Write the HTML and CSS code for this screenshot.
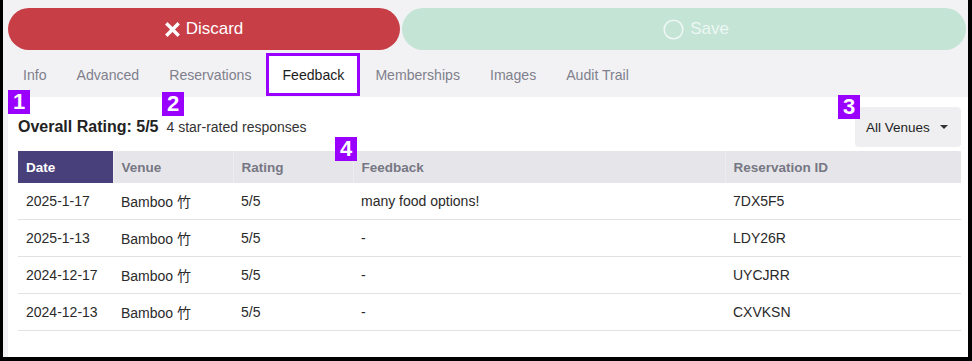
FILE: index.html
```html
<!DOCTYPE html>
<html lang="en">
<head>
  <meta charset="UTF-8" />
  <meta name="viewport" content="width=device-width, initial-scale=1.0" />
  <title>Venue — Feedback</title>
  <link rel="stylesheet" href="styles.css">
</head>
<body>
  <div class="frame">
    <div class="actions">
      <button class="btn discard" type="button">
        <svg width="15" height="15" viewBox="0 0 15 15"><path d="M2.5 2.5 L12.5 12.5 M12.5 2.5 L2.5 12.5" stroke="#fff" stroke-width="3.4" stroke-linecap="square"/></svg>
        Discard
      </button>
      <button class="btn save" type="button" disabled>
        <svg width="21" height="21" viewBox="0 0 21 21"><circle cx="10.5" cy="10.5" r="9.3" fill="none" stroke="currentColor" stroke-width="1.6"/></svg>
        Save
      </button>
    </div>

    <nav class="tabs">
      <a class="tab">Info</a>
      <a class="tab">Advanced</a>
      <a class="tab">Reservations</a>
      <a class="tab active">Feedback</a>
      <a class="tab">Memberships</a>
      <a class="tab">Images</a>
      <a class="tab">Audit Trail</a>
    </nav>

    <div class="panel">
      <div class="summary">
        <span class="rating">Overall Rating: 5/5</span>
        <span class="count">4 star-rated responses</span>
        <button class="select" type="button">All Venues <span class="caret"></span></button>
      </div>

      <table class="grid">
        <thead>
          <tr>
            <th class="c-date sorted">Date</th>
            <th class="c-venue">Venue</th>
            <th class="c-rating">Rating</th>
            <th class="c-feedback">Feedback</th>
            <th class="c-id">Reservation ID</th>
          </tr>
        </thead>
        <tbody>
          <tr><td>2025-1-17</td><td>Bamboo 竹</td><td>5/5</td><td>many food options!</td><td>7DX5F5</td></tr>
          <tr><td>2025-1-13</td><td>Bamboo 竹</td><td>5/5</td><td>-</td><td>LDY26R</td></tr>
          <tr><td>2024-12-17</td><td>Bamboo 竹</td><td>5/5</td><td>-</td><td>UYCJRR</td></tr>
          <tr><td>2024-12-13</td><td>Bamboo 竹</td><td>5/5</td><td>-</td><td>CXVKSN</td></tr>
        </tbody>
      </table>
    </div>

    <span class="marker m1">1</span>
    <span class="marker m2">2</span>
    <span class="marker m3">3</span>
    <span class="marker m4">4</span>
  </div>
</body>
</html>
```

FILE: styles.css
```css
body {
  margin: 0;
  font-family: "Liberation Sans", Arial, "Noto Sans CJK SC", sans-serif;
  background: #000;
}
.frame {
  position: relative;
  box-sizing: border-box;
  height: 361px;
  background: #f2f2f4;
  border-left: 3px solid #000;
  border-right: 4px solid #000;
  border-bottom: 4px solid #000;
  display: flex;
  flex-direction: column;
  overflow: hidden;
}
.actions {
  display: flex;
  gap: 2px;
  padding: 8px 2px 0 5px;
}
.btn {
  height: 42px;
  border: none;
  border-radius: 21px;
  display: flex;
  align-items: center;
  justify-content: center;
  gap: 6px;
  font-family: inherit;
  font-size: 17px;
  color: #fff;
  cursor: pointer;
}
.discard {
  width: 392px;
  background: #c73e47;
}
.save {
  flex: 1;
  padding-left: 30px;
  background: #c4e4d6;
  color: rgba(255,255,255,0.72);
}
.tabs {
  display: flex;
  margin-top: 3px;
  padding-left: 5px;
  height: 43px;
}
.tab {
  display: flex;
  align-items: center;
  padding: 0 15px;
  font-size: 14.1px;
  color: #80808c;
}
.tab.active {
  background: #fff;
  color: #1c1c1c;
  padding: 0 13px;
  border: 3px solid #9a00ff;
  box-sizing: border-box;
}
.panel {
  flex: 1;
  background: #fff;
  margin-left: 5px;
  margin-top: 1px;
  padding: 10px 7px 0 10px;
}
.summary {
  display: flex;
  align-items: center;
  height: 40px;
  margin-bottom: 4px;
}
.rating {
  font-size: 16px;
  font-weight: bold;
  color: #222;
  margin-right: 8px;
}
.count {
  font-size: 14px;
  color: #333;
}
.select {
  margin-left: auto;
  height: 40px;
  width: 106px;
  border: none;
  border-radius: 4px;
  background: #efeff1;
  font-family: inherit;
  font-size: 13.5px;
  color: #222;
  display: flex;
  align-items: center;
  padding: 0 0 0 11px;
  gap: 10px;
}
.caret {
  border-left: 4px solid transparent;
  border-right: 4px solid transparent;
  border-top: 4px solid #333;
}
.grid {
  width: 943px;
  border-collapse: collapse;
  table-layout: fixed;
  font-size: 14px;
}
.grid th {
  box-sizing: border-box;
  height: 32px;
  background: #e6e6ea;
  color: #777784;
  font-size: 13.5px;
  font-weight: bold;
  text-align: left;
  padding: 0 8px;
  border-left: 1px solid #ededf0;
}
.grid th.sorted {
  background: #48407a;
  color: #fff;
  border-left: none;
}
.c-date { width: 95px; }
.c-venue { width: 120px; }
.c-rating { width: 120px; }
.c-feedback { width: 372px; }
.grid td {
  height: 36px;
  padding: 0 8px;
  color: #2a2a2a;
  border-bottom: 1px solid #e2e2e4;
  white-space: nowrap;
}
.marker {
  position: absolute;
  width: 22px;
  height: 24px;
  background: #9a00ff;
  color: #fff;
  font-family: "Liberation Sans", Arial, sans-serif;
  font-weight: bold;
  font-size: 22px;
  line-height: 24px;
  text-align: center;
}
.m1 { left: 5px; top: 90px; }
.m2 { left: 159px; top: 92px; }
.m3 { left: 835px; top: 95px; }
.m4 { left: 332px; top: 137px; }
```
